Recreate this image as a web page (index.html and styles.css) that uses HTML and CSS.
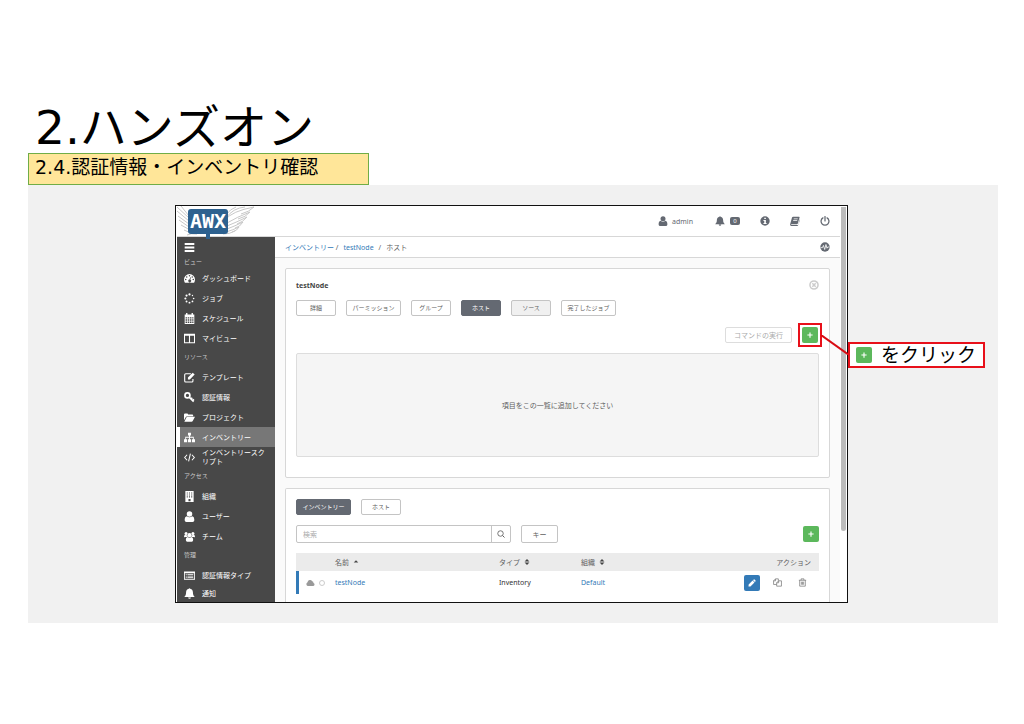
FILE: index.html
```html
<!DOCTYPE html>
<html lang="ja">
<head>
  <meta charset="UTF-8">
  <meta name="viewport" content="width=device-width, initial-scale=1">
  <title>2.ハンズオン</title>
  <link rel="stylesheet" href="styles.css">
</head>
<body>
  <!-- icon set -->
  <svg class="sprite" aria-hidden="true">
    <symbol id="i-user" viewBox="0 0 16 16"><circle cx="8" cy="4.5" r="4"/><path d="M4.3 7.5C1.5 7.8 1 10.500 1 13.500Q1 16 3.500 16h9q2.500 0 2.500-2.500c0-3-.5-5.700-3.300-6-2 2.200-5.400 2.200-7.400 0z"/></symbol>
    <symbol id="i-bell" viewBox="0 0 16 16"><path d="M7 1.200a1 1 0 0 1 2 0C11.800 1.700 13 4 13 6.500c0 3.500 1 5 2.700 6.500H.3C2 11.500 3 10 3 6.500 3 4 4.200 1.700 7 1.200zM6 13.700h4a2 2 0 0 1-4 0z"/></symbol>
    <symbol id="i-info" viewBox="0 0 16 16"><path fill-rule="evenodd" d="M8 .5a7.500 7.500 0 1 0 0 15 7.500 7.500 0 0 0 0-15zM6.800 2.700h2.600v2.200H6.800zM5.500 6.200h3.900v4.900h1.200v1.700H5.500v-1.700h1.300V7.900H5.500z"/></symbol>
    <symbol id="i-book" viewBox="0 0 16 16"><path fill-rule="evenodd" d="M5 1h9.500q1.200.2.8 1.500L12.500 12q-.4 1-1.500 1H2.500q-1 0-.7.800.2.600 1.200.600h9q1 0 1.300-1L15.600 5q.6.500.3 1.400l-2.700 8.100Q12.700 16 11.200 16H2.500Q0 15.800.2 13L3.200 2.400Q3.700 1 5 1zm1 3-.3 1h6.500l.3-1zm-.8 2.500-.3 1h6.500l.3-1z"/></symbol>
    <symbol id="i-power" viewBox="0 0 16 16"><path d="M4.700 3A6.300 6.300 0 1 0 11.300 3M8 .8v7" fill="none" stroke="currentColor" stroke-width="2" stroke-linecap="round"/></symbol>
    <symbol id="i-activity" viewBox="0 0 16 16"><circle cx="8" cy="8" r="7.500"/><path d="M1 9h3l1.500-3.500L7.500 12l2-8 1.700 6 1-2H15" fill="none" stroke="#fff" stroke-width="1.300"/></symbol>
    <symbol id="i-close" viewBox="0 0 16 16"><circle cx="8" cy="8" r="6.500" fill="none" stroke="currentColor" stroke-width="2.400"/><path d="M5.300 5.300l5.400 5.400M10.700 5.300l-5.400 5.400" stroke="currentColor" stroke-width="2.400"/></symbol>
    <symbol id="i-bars" viewBox="0 0 16 16"><path d="M1 1.500h14v3H1zM1 6.500h14v3H1zM1 11.500h14v3H1z"/></symbol>
    <symbol id="i-dash" viewBox="0 0 16 16"><path fill-rule="evenodd" d="M8 1.500a8 8 0 0 0-8 8c0 1.800.5 3.300 1.300 4.500h13.400A8 8 0 0 0 16 9.500a8 8 0 0 0-8-8zM8 3a1.100 1.100 0 1 1 0 2.200A1.100 1.100 0 0 1 8 3zM4 4.600a1.100 1.100 0 1 1 0 2.200 1.100 1.100 0 0 1 0-2.200zm8 0a1.100 1.100 0 1 1 0 2.200 1.100 1.100 0 0 1 0-2.200zM2.500 8.500a1.100 1.100 0 1 1 0 2.200 1.100 1.100 0 0 1 0-2.200zm11 0a1.100 1.100 0 1 1 0 2.200 1.100 1.100 0 0 1 0-2.200zM9 6.300l1 .3-.8 3.200a2 2 0 1 1-1.100-.2z"/></symbol>
    <symbol id="i-spin" viewBox="0 0 16 16"><circle cx="8" cy="2" r="1.600"/><circle cx="12.300" cy="3.700" r="1"/><circle cx="14" cy="8" r="1.200"/><circle cx="12.300" cy="12.300" r="1.300"/><circle cx="8" cy="14" r="1.400"/><circle cx="3.700" cy="12.300" r="1.400"/><circle cx="2" cy="8" r="1.500"/><circle cx="3.700" cy="3.700" r="1.600"/></symbol>
    <symbol id="i-cal" viewBox="0 0 16 16"><path fill-rule="evenodd" d="M3 0h2v2h6V0h2v2h2v14H1V2h2zM2.300 6v2h2.200V6zm3.200 0v2h2.200V6zm3.200 0v2h2.200V6zm3.200 0v2h1.900V6zM2.300 9v2.300h2.200V9zm3.200 0v2.300h2.200V9zm3.200 0v2.300h2.200V9zm3.200 0v2.300h1.900V9zM2.300 12.300v2.200h2.200v-2.200zm3.200 0v2.200h2.200v-2.200zm3.200 0v2.200h2.200v-2.200zm3.200 0v2.200h1.900v-2.200z"/></symbol>
    <symbol id="i-cols" viewBox="0 0 16 16"><path fill-rule="evenodd" d="M0 1h16v14H0zm1.500 3v9.500h5.700V4zm7.300 0v9.500h5.700V4z"/></symbol>
    <symbol id="i-edit" viewBox="0 0 16 16"><path d="M10 2.500H2.500q-1.500 0-1.500 1.500v9q0 1.500 1.500 1.500h9q1.500 0 1.500-1.500v-3" fill="none" stroke="currentColor" stroke-width="1.600"/><path d="M12.700 1l2.800 2.800-7 7H5.700V8z"/></symbol>
    <symbol id="i-key" viewBox="0 0 16 16"><circle cx="5" cy="5" r="3.600" fill="none" stroke="currentColor" stroke-width="2.500"/><path d="M7.500 7.500l6.500 6.500M10 10.500l2-2.200M12.300 13l2.200-2.300" stroke="currentColor" stroke-width="2.200"/></symbol>
    <symbol id="i-folder" viewBox="0 0 16 16"><path d="M0 12V3.500Q0 2 1.500 2h3Q6 2 6 3.500h6q1.300 0 1.300 1.300V6H5Q3.500 6 2.700 7.200zM4.800 7H16l-3.300 6q-.5 1-1.700 1H.5l3-6q.5-1 1.300-1z"/></symbol>
    <symbol id="i-sitemap" viewBox="0 0 16 16"><path d="M5.800 1h4.400v4H8.700v2h5.500v3.500H16V15h-4.500v-4.500H13V8.200H8.700v2.300h1.500V15H5.800v-4.500h1.500V8.200H3v2.300h1.500V15H0v-4.500h1.800V7h5.500V5H5.800z"/></symbol>
    <symbol id="i-code" viewBox="0 0 16 16"><path d="M4.500 4L1 8l3.500 4M11.500 4L15 8l-3.500 4M9.300 2.500l-2.600 11" fill="none" stroke="currentColor" stroke-width="1.500"/></symbol>
    <symbol id="i-building" viewBox="0 0 16 16"><path fill-rule="evenodd" d="M2 0h12v16H2zM4 2.200v1.500h1.500V2.200zm3.200 0v1.500h1.500V2.200zm3.200 0v1.500H12V2.200zM4 5v1.500h1.500V5zm3.200 0v1.500h1.500V5zm3.200 0v1.500H12V5zM4 7.800v1.500h1.500V7.800zm3.200 0v1.500h1.500V7.800zm3.200 0v1.500H12V7.800zM6.500 11.500V15h3v-3.500z"/></symbol>
    <symbol id="i-users" viewBox="0 0 16 16"><circle cx="3" cy="3.500" r="2.200"/><circle cx="13" cy="3.500" r="2.200"/><circle cx="8" cy="6" r="3"/><path d="M0 9q0-3.300 1.500-3.500 1.500 1 3 .5.200 1.800 1 2.800H2Q0 9 0 9zM16 9q0-3.300-1.500-3.500-1.500 1-3 .5-.2 1.800-1 2.800H14zM5.300 8.600C3.200 9 2.700 11 2.700 13q0 2.500 2 2.500h6.600q2 0 2-2.500c0-2-.5-4-2.600-4.400-1.500 1.500-3.900 1.500-5.400 0z"/></symbol>
    <symbol id="i-card" viewBox="0 0 16 16"><path fill-rule="evenodd" d="M0 2h16v12H0zm1.200 2.800v8h13.600v-8z"/><path d="M2.500 6h1.500v1.300H2.500zM5 6h8.500v1.300H5zM2.500 8.200H4v1.300H2.500zM5 8.200h8.500v1.300H5zM2.500 10.400H4v1.300H2.500zM5 10.400h8.500v1.300H5z"/></symbol>
    <symbol id="i-plus" viewBox="0 0 16 16"><path d="M8 1v14M1 8h14" stroke="currentColor" stroke-width="3"/></symbol>
    <symbol id="i-search" viewBox="0 0 16 16"><circle cx="7" cy="7" r="5.500" fill="none" stroke="currentColor" stroke-width="1.700"/><path d="M11 11l4 4" stroke="currentColor" stroke-width="2"/></symbol>
    <symbol id="i-cloud" viewBox="0 0 16 16"><path d="M4 13.500a3.700 3.700 0 0 1-1.300-7A4.500 4.500 0 0 1 11 4.700a2.700 2.700 0 0 1 2.200 3.100 3 3 0 0 1-.2 5.700z"/></symbol>
    <symbol id="i-pencil" viewBox="0 0 16 16"><path d="M11.500.8q.8-.5 1.500.2l2 2q.7.700.2 1.500L13.700 6 10 2.300zM9.200 3.100l3.700 3.700-8 8L1 15.200l.3-4z"/></symbol>
    <symbol id="i-copy" viewBox="0 0 16 16"><path d="M6.500 11.500H1V5l3.500-3.500h5V5M4.500 1.500V5H1M10 5h5v9.500H6.500v-6zM10 5v3.500H6.500" fill="none" stroke="currentColor" stroke-width="1.300"/></symbol>
    <symbol id="i-trash" viewBox="0 0 16 16"><path d="M1.500 4h13M3 4v10.500h10V4M5.500 4V1.500h5V4M6 6.500V12M8 6.500V12M10 6.500V12" fill="none" stroke="currentColor" stroke-width="1.300"/></symbol>
    <symbol id="i-up" viewBox="0 0 16 16"><path d="M8 3l6 6H2z"/></symbol>
    <symbol id="i-sort" viewBox="0 0 16 16"><path d="M8 0l6.500 6.800h-13zM8 16L1.500 9.200h13z"/></symbol>
  </svg>

  <main class="slide">
    <h1>2.ハンズオン</h1>
    <h2>2.4.認証情報・インベントリ確認</h2>

    <div class="stage">
      <div class="app">
        <header class="topbar">
          <div class="logo">
            <svg class="wings" viewBox="0 0 78 30" stroke="#c8c8c8" stroke-width="1">
              <path d="M12 12L0 1M12 15L0 5M12 18L1 10M12 21L2 14M13 24L4 19M14 27L7 24M12 10L4 0M20 28q-6-1-10 1"/>
              <path d="M48 14Q55 5 77 1Q72 6 64 8M50 17Q60 11 73 6Q69 11 61 13M50 20Q60 16 70 11Q66 16 60 18M50 23Q58 20 66 16Q63 21 58 22M49 26Q56 24 62 21Q60 25 55 26M46 28Q53 28 58 25M49 12Q56 2 68 1M49 9Q53 3 59 1"/>
            </svg>
            <span class="logo-mark">AWX</span>
          </div>
          <nav class="top-links">
            <a href="#" class="me"><svg class="icon"><use href="#i-user"/></svg>admin</a>
            <a href="#" class="bell"><svg class="icon"><use href="#i-bell"/></svg><span class="count">0</span></a>
            <a href="#" aria-label="info"><svg class="icon"><use href="#i-info"/></svg></a>
            <a href="#" aria-label="docs"><svg class="icon"><use href="#i-book"/></svg></a>
            <a href="#" aria-label="logout"><svg class="icon"><use href="#i-power"/></svg></a>
          </nav>
        </header>

        <div class="body">
          <nav class="sidebar">
            <button class="menu" aria-label="menu"><svg class="icon"><use href="#i-bars"/></svg></button>
            <p class="first">ビュー</p>
            <a href="#"><svg class="icon"><use href="#i-dash"/></svg>ダッシュボード</a>
            <a href="#"><svg class="icon"><use href="#i-spin"/></svg>ジョブ</a>
            <a href="#"><svg class="icon"><use href="#i-cal"/></svg>スケジュール</a>
            <a href="#"><svg class="icon"><use href="#i-cols"/></svg>マイビュー</a>
            <p>リソース</p>
            <a href="#"><svg class="icon"><use href="#i-edit"/></svg>テンプレート</a>
            <a href="#"><svg class="icon"><use href="#i-key"/></svg>認証情報</a>
            <a href="#"><svg class="icon"><use href="#i-folder"/></svg>プロジェクト</a>
            <a href="#" class="active"><svg class="icon"><use href="#i-sitemap"/></svg>インベントリー</a>
            <a href="#"><svg class="icon"><use href="#i-code"/></svg><span>インベントリースク<br>リプト</span></a>
            <p>アクセス</p>
            <a href="#"><svg class="icon"><use href="#i-building"/></svg>組織</a>
            <a href="#"><svg class="icon"><use href="#i-user"/></svg>ユーザー</a>
            <a href="#"><svg class="icon"><use href="#i-users"/></svg>チーム</a>
            <p>管理</p>
            <a href="#"><svg class="icon"><use href="#i-card"/></svg>認証情報タイプ</a>
            <a href="#" class="last"><svg class="icon"><use href="#i-bell"/></svg>通知</a>
          </nav>

          <div class="content">
            <div class="crumbs">
              <div class="trail">
                <span><a href="#">インベントリー</a> /</span>
                <a href="#">testNode</a>
                <span>/</span>
                <span>ホスト</span>
              </div>
              <svg class="icon"><use href="#i-activity"/></svg>
            </div>

            <section class="panel">
              <div class="panel-title">
                <h3>testNode</h3>
                <button class="plain" aria-label="close"><svg class="icon"><use href="#i-close"/></svg></button>
              </div>
              <div class="tabs">
                <button class="tab">詳細</button>
                <button class="tab long">パーミッション</button>
                <button class="tab">グループ</button>
                <button class="tab on">ホスト</button>
                <button class="tab off">ソース</button>
                <button class="tab long">完了したジョブ</button>
              </div>
              <div class="actions">
                <button class="run" disabled>コマンドの実行</button>
                <div class="target">
                  <button class="add" aria-label="add"><svg><use href="#i-plus"/></svg></button>
                </div>
              </div>
              <div class="empty">項目をこの一覧に追加してください</div>
            </section>

            <section class="panel list">
              <div class="tabs">
                <button class="tab long on">インベントリー</button>
                <button class="tab">ホスト</button>
              </div>
              <div class="search-row">
                <div class="search">
                  <input type="text" placeholder="検索" aria-label="検索">
                  <button aria-label="search"><svg class="icon"><use href="#i-search"/></svg></button>
                </div>
                <button class="key">キー</button>
                <button class="add" aria-label="add"><svg><use href="#i-plus"/></svg></button>
              </div>
              <table>
                <thead>
                  <tr>
                    <th class="c-status"></th>
                    <th class="c-name">名前 <svg class="sort"><use href="#i-up"/></svg></th>
                    <th class="c-type">タイプ <svg class="sort"><use href="#i-sort"/></svg></th>
                    <th>組織 <svg class="sort"><use href="#i-sort"/></svg></th>
                    <th class="c-action">アクション</th>
                  </tr>
                </thead>
                <tbody>
                  <tr>
                    <td class="c-status"><div class="status"><svg class="icon"><use href="#i-cloud"/></svg><i class="ring"></i></div></td>
                    <td><a href="#">testNode</a></td>
                    <td>Inventory</td>
                    <td><a href="#">Default</a></td>
                    <td class="c-action">
                      <div class="row-actions">
                        <button class="edit" aria-label="edit"><svg><use href="#i-pencil"/></svg></button>
                        <button class="plain" aria-label="copy"><svg class="icon"><use href="#i-copy"/></svg></button>
                        <button class="plain" aria-label="delete"><svg class="icon"><use href="#i-trash"/></svg></button>
                      </div>
                    </td>
                  </tr>
                </tbody>
              </table>
            </section>
          </div>
        </div>
        <div class="scrollbar"></div>
      </div>

      <!-- callout and its leader line -->
      <svg class="leader" viewBox="0 0 28 20"><path d="M0 0L28 20" stroke="#d80b12" stroke-width="2"/></svg>
      <div class="callout">
        <span class="add"><svg><use href="#i-plus"/></svg></span>
        <span>をクリック</span>
      </div>
    </div>
  </main>
</body>
</html>
```
FILE: styles.css
```css
:root {
  --link: #337ab7;
  --green: #5cb85c;
  --red: #e8101a;
  --dark: #646972;
  --line: #d7d7d7;
  --text: #606060;
}

* {
  box-sizing: border-box;
}

body {
  margin: 0;
  background: #fff;
  color: #000;
  font-family: "DejaVu Sans", "Noto Sans CJK JP", sans-serif;
}

a {
  color: var(--link);
  text-decoration: none;
}

button {
  margin: 0;
  padding: 0;
  border: none;
  background: none;
  color: inherit;
  font: inherit;
  cursor: pointer;
}

svg {
  display: block;
  flex: none;
  fill: currentColor;
}

.sprite {
  position: absolute;
  width: 0;
  height: 0;
}

.icon {
  width: 10px;
  height: 10px;
}

/* Slide */
.slide {
  padding: 103px 26px 0 28px;
}

h1 {
  margin: 0 0 0 7px;
  font-size: 47px;
  line-height: 50px;
  font-weight: 400;
}

h2 {
  width: 341px;
  height: 32px;
  margin: 0;
  padding: 0 6px;
  border: 1px solid #70ad47;
  background: #ffe699;
  font-size: 19px;
  line-height: 26px;
  font-weight: 400;
}

.stage {
  position: relative;
  padding: 20px 150px 20px 147px;
  background: #f1f1f1;
}

/* App window */
.app {
  position: relative;
  overflow: hidden;
  padding: 0 7px 0 1px;
  border: 1px solid #111;
  background: #fff;
  color: var(--text);
  font-family: "Noto Sans", "Noto Sans CJK JP", sans-serif;
  font-size: 7px;
  line-height: 9px;
}

.scrollbar {
  position: absolute;
  top: 1px;
  right: 1px;
  width: 5px;
  height: 324px;
  border-radius: 0 0 3px 3px;
  background: #bcbcbc;
}

.topbar {
  display: flex;
  justify-content: space-between;
  align-items: center;
  height: 31px;
  padding-right: 10px;
  border-bottom: 1px solid var(--line);
}

.logo {
  position: relative;
  width: 78px;
  height: 30px;
  padding: 3px 0 0 11px;
}

.wings {
  position: absolute;
  top: 0;
  left: 0;
  width: 78px;
  height: 30px;
  fill: none;
}

.logo-mark {
  position: relative;
  display: block;
  width: 40px;
  height: 25px;
  border-radius: 3px;
  background: #2d618f;
  color: #fff;
  font: bold 20px/25px "DejaVu Sans Mono", monospace;
  text-align: center;
}

.logo-mark::after {
  content: "";
  position: absolute;
  top: 25px;
  left: 18px;
  width: 4px;
  height: 5px;
  background: #2d618f;
}

.top-links {
  display: flex;
  align-items: center;
  gap: 20px;
}

.top-links a {
  display: flex;
  align-items: center;
  color: var(--dark);
}

.top-links .me {
  gap: 4px;
  margin-right: 2px;
}

.bell {
  gap: 5px;
}

.count {
  width: 10px;
  border-radius: 2px;
  background: var(--dark);
  color: #fff;
  font-size: 6px;
  line-height: 8px;
  text-align: center;
}

.body {
  display: flex;
}

/* Sidebar */
.sidebar {
  width: 98px;
  flex: none;
  background: #484848;
  color: #fff;
}

.sidebar .menu {
  display: flex;
  align-items: center;
  height: 20px;
  padding-left: 7px;
}

.sidebar p {
  margin: 0;
  padding-left: 7px;
  color: #ccc;
  font-size: 6px;
  line-height: 19px;
}

.sidebar .first {
  line-height: 11px;
}

.sidebar a {
  display: flex;
  align-items: center;
  gap: 7px;
  height: 20px;
  padding-left: 7px;
  color: #fff;
}

.sidebar .icon {
  width: 11px;
  height: 11px;
}

.sidebar .active {
  padding-left: 4px;
  border-left: 3px solid #fff;
  background: #777;
}

.sidebar .last {
  height: 17px;
}

/* Content */
.content {
  display: flex;
  flex-direction: column;
  flex: 1;
  background: #fafafa;
}

.crumbs {
  display: flex;
  align-items: center;
  justify-content: space-between;
  height: 21px;
  margin-bottom: 10px;
  padding: 0 10px;
  border-bottom: 1px solid var(--line);
  background: #fff;
}

.trail {
  display: flex;
  gap: 5px;
}

.crumbs .icon {
  color: var(--dark);
}

.panel {
  margin: 0 10px 10px;
  padding: 8px 10px 20px;
  border: 1px solid var(--line);
  border-radius: 2px;
  background: #fff;
}

.list {
  flex: 1;
  margin-bottom: 0;
  padding: 10px 10px 0;
  border-bottom: none;
  border-radius: 2px 2px 0 0;
}

.panel-title {
  display: flex;
  align-items: center;
  justify-content: space-between;
  height: 16px;
  margin-bottom: 7px;
}

h3 {
  margin: 0;
  color: #444;
  font-size: 7px;
  font-weight: 700;
}

.plain {
  color: #777;
}

.panel-title .plain {
  color: #ccc;
}

.tabs {
  display: flex;
  gap: 10px;
  margin-bottom: 10px;
}

.tab,
.key,
.run {
  min-width: 40px;
  height: 16px;
  border: 1px solid #c4c4c4;
  border-radius: 2px;
  background: #fff;
  font-size: 6px;
}

.tab.long {
  min-width: 55px;
}

.tab.on {
  border-color: var(--dark);
  background: var(--dark);
  color: #fff;
}

.tab.off {
  background: #f0f0f0;
}

.actions {
  display: flex;
  align-items: center;
  justify-content: flex-end;
  gap: 6px;
  height: 18px;
  margin: 0 -3px 9px 0;
}

.run {
  width: 67px;
  border-color: #ddd;
  color: #aaa;
  font-size: 7px;
}

.target {
  margin: -3px 0;
  padding: 2px;
  border: 2px solid var(--red);
}

.add,
.edit {
  display: flex;
  align-items: center;
  justify-content: center;
  width: 16px;
  height: 16px;
  border-radius: 2px;
  background: var(--green);
  color: #fff;
}

.add svg {
  width: 6px;
  height: 6px;
}

.edit {
  background: var(--link);
}

.edit svg {
  width: 8px;
  height: 8px;
}

.empty {
  display: flex;
  align-items: center;
  justify-content: center;
  height: 104px;
  border: 1px solid #ddd;
  border-radius: 2px;
  background: #f5f5f5;
}

.search-row {
  display: flex;
  align-items: center;
  margin-bottom: 10px;
}

.search {
  display: flex;
  width: 215px;
  height: 18px;
  border: 1px solid #c4c4c4;
  border-radius: 2px;
}

.search input {
  flex: 1;
  min-width: 0;
  padding: 0 6px;
  border: none;
  background: none;
  font: inherit;
}

.search input::placeholder {
  color: #aaa;
}

.search button {
  display: flex;
  align-items: center;
  justify-content: center;
  width: 19px;
  border-left: 1px solid #c4c4c4;
}

.search .icon {
  width: 8px;
  height: 8px;
}

.key {
  min-width: 37px;
  height: 18px;
  margin-left: 10px;
  font-size: 7px;
}

.search-row .add {
  margin-left: auto;
}

/* Table */
table {
  width: 100%;
  border-spacing: 0;
  table-layout: fixed;
}

th,
td {
  padding: 0;
  text-align: left;
  font-weight: 400;
}

th {
  height: 18px;
  background: #ebebeb;
}

td {
  height: 23px;
  color: #333;
}

.c-status {
  width: 39px;
}

.c-name {
  width: 164px;
}

.c-type {
  width: 82px;
}

.c-action {
  padding-right: 8px;
  text-align: right;
}

.sort {
  display: inline-block;
  width: 6px;
  height: 6px;
  margin-left: 2px;
  color: #444;
}

td.c-status {
  border-left: 3px solid var(--link);
}

.status {
  display: flex;
  align-items: center;
  gap: 4px;
  padding-left: 7px;
  color: #999;
}

.status .icon {
  width: 9px;
}

.ring {
  width: 6px;
  height: 6px;
  border: 1px solid #ccc;
  border-radius: 50%;
}

.row-actions {
  display: flex;
  align-items: center;
  justify-content: flex-end;
  gap: 16px;
  padding-right: 4px;
}

.row-actions .edit {
  margin-right: -3px;
}

.row-actions .icon {
  width: 9px;
  height: 9px;
}

/* Callout */
.leader {
  position: absolute;
  top: 150px;
  right: 149px;
  width: 28px;
  height: 20px;
}

.callout {
  position: absolute;
  top: 157px;
  right: 13px;
  display: flex;
  align-items: center;
  gap: 9px;
  width: 137px;
  height: 26px;
  padding-left: 6px;
  border: 2px solid var(--red);
  background: #fff;
  font-size: 19px;
  line-height: 20px;
}
```
